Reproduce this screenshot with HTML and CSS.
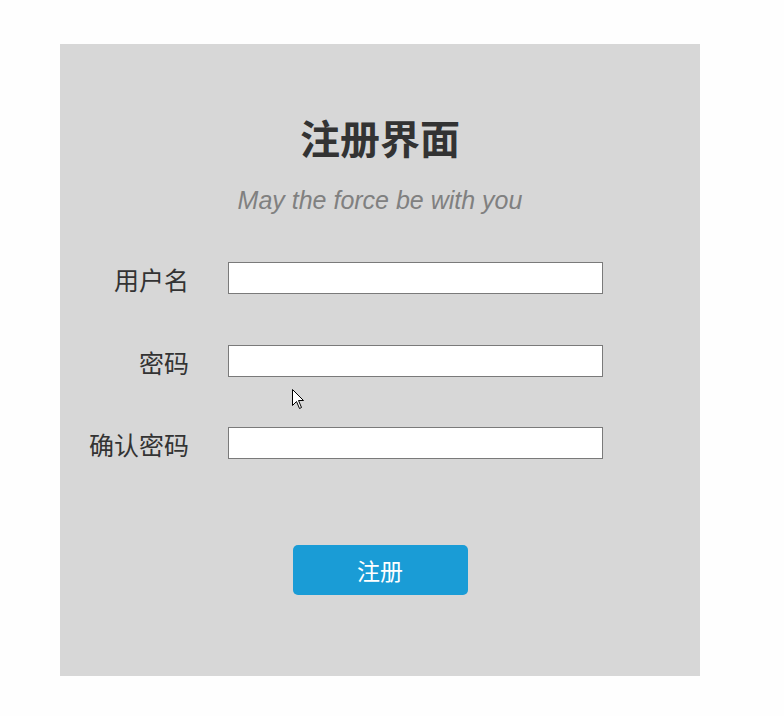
FILE: index.html
```html
<!DOCTYPE html>
<html lang="zh-CN">
<head>
<meta charset="utf-8">
<title>注册界面</title>
<link rel="stylesheet" href="styles.css">
</head>
<body>
<div class="panel">
  <h1 class="title">注册界面</h1>
  <p class="subtitle">May the force be with you</p>
  <form class="form">
    <label class="label" for="u">用户名</label>
    <input class="field" id="u" type="text">
    <label class="label" for="p">密码</label>
    <input class="field" id="p" type="password">
    <label class="label" for="c">确认密码</label>
    <input class="field" id="c" type="password">
  </form>
  <button class="btn" type="button">注册</button>
  <svg class="cursor" width="13" height="21" viewBox="0 0 13 21">
    <path d="M0.5 0.5 L0.5 16.5 L4.5 12.5 L7.5 19.5 L9.5 18.5 L6.5 11.5 L11.5 11.5 Z" fill="#fff" stroke="#000" stroke-width="1" stroke-linejoin="miter"/>
  </svg>
</div>
</body>
</html>
```
FILE: styles.css
```css
html, body {
  margin: 0;
  padding: 0;
  background: #fefefe;
}
body {
  font-family: "Liberation Sans", "Noto Sans CJK SC", sans-serif;
}
.panel {
  position: relative;
  box-sizing: border-box;
  margin: 44px 0 0 60px;
  width: 640px;
  height: 632px;
  background: #d7d7d7;
  padding-top: 69px;
  display: flex;
  flex-direction: column;
  align-items: center;
}
.title {
  margin: 0;
  font-family: "Noto Sans CJK SC", sans-serif;
  font-size: 40px;
  line-height: 48px;
  font-weight: 700;
  color: #333333;
}
.subtitle {
  margin: 24px 0 0;
  font-family: "Liberation Sans", Arial, sans-serif;
  font-style: italic;
  font-size: 25px;
  line-height: 30px;
  color: #808080;
}
.form {
  align-self: stretch;
  margin-top: 47px;
  display: grid;
  grid-template-columns: 129px 375px;
  grid-auto-rows: 32px;
  column-gap: 39px;
  row-gap: 50.5px;
}
.label {
  font-family: "Noto Sans CJK SC", sans-serif;
  font-size: 25px;
  line-height: 30px;
  padding-top: 2px;
  text-align: right;
  color: #333333;
}
.field {
  box-sizing: border-box;
  width: 375px;
  height: 32px;
  margin: 0;
  border: 1px solid #7a7a7a;
  background: #ffffff;
  padding: 0 4px;
  font-size: 16px;
}
.btn {
  margin-top: 86px;
  width: 175px;
  height: 50px;
  border: none;
  border-radius: 5px;
  background: #1a9cd6;
  color: #ffffff;
  font-family: "Noto Sans CJK SC", sans-serif;
  font-size: 23px;
  line-height: 48px;
  padding: 0;
}
.cursor {
  position: absolute;
  left: 232px;
  top: 345px;
}
```
